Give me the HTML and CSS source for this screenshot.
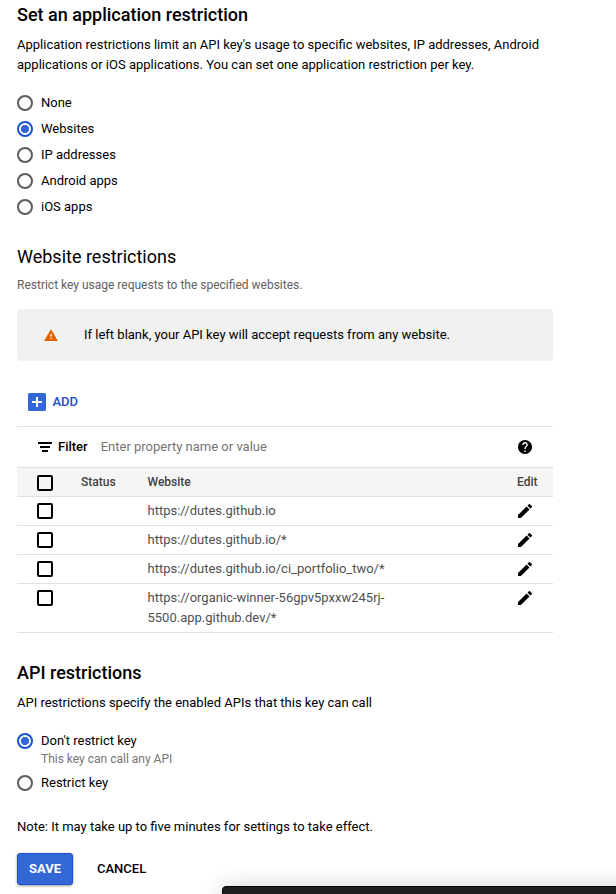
FILE: index.html
```html
<!DOCTYPE html>
<html lang="en">
<head>
<meta charset="utf-8">
<title>API key restrictions</title>
<link rel="stylesheet" href="styles.css">
</head>
<body>
<svg class="defs" aria-hidden="true">
  <symbol id="pencil" viewBox="3 3 18 18"><path d="M3 17.25V21h3.75L17.81 9.94l-3.75-3.75L3 17.25zM20.71 7.04a1 1 0 0 0 0-1.41l-2.34-2.34a1 1 0 0 0-1.41 0l-1.83 1.83 3.75 3.75 1.83-1.83z"/></symbol>
</svg>
<main class="page">
  <section class="application">
    <h2 class="title">Set an application restriction</h2>
    <p class="text intro">Application restrictions limit an API key's usage to specific websites, IP addresses, Android<br>applications or iOS applications. You can set one application restriction per key.</p>
    <div class="options">
      <label class="option"><span class="radio"></span><span>None</span></label>
      <label class="option"><span class="radio checked"></span><span>Websites</span></label>
      <label class="option"><span class="radio"></span><span>IP addresses</span></label>
      <label class="option"><span class="radio"></span><span>Android apps</span></label>
      <label class="option"><span class="radio"></span><span>iOS apps</span></label>
    </div>
  </section>

  <section class="websites">
    <h3 class="title light">Website restrictions</h3>
    <p class="hint">Restrict key usage requests to the specified websites.</p>
    <div class="notice">
      <svg class="warning" viewBox="1 2 22 19"><path fill="#e06500" d="M1 21h22L12 2z"/><path fill="#fff" d="M11 10h2v4h-2zM11 16h2v2h-2z"/></svg>
      <span class="notice-text">If left blank, your API key will accept requests from any website.</span>
    </div>
    <div class="add">
      <svg class="plus" viewBox="0 0 18 18"><rect width="18" height="18" rx="1.5" fill="#3367d6"/><path d="M8 4h2v4h4v2h-4v4H8v-4H4V8h4z" fill="#fff"/></svg>
      <span class="add-label">ADD</span>
    </div>
    <div class="filter">
      <svg class="filter-icon" viewBox="0 0 14 10"><path d="M0 0h14v2H0zM2 4h10v2H2zM4 8h6v2H4z"/></svg>
      <span class="filter-label">Filter</span>
      <span class="placeholder">Enter property name or value</span>
      <svg class="help" viewBox="2 2 20 20"><path d="M12 2C6.48 2 2 6.48 2 12s4.480 10 10 10 10-4.480 10-10S17.520 2 12 2zm1 17h-2v-2h2v2zm2.070-7.750l-.9.920C13.450 12.900 13 13.500 13 15h-2v-.5c0-1.100.45-2.100 1.170-2.830l1.240-1.260c.37-.36.59-.86.59-1.410 0-1.100-.9-2-2-2s-2 .9-2 2H8c0-2.210 1.790-4 4-4s4 1.790 4 4c0 .88-.36 1.680-.93 2.250z"/></svg>
    </div>
    <div class="table">
      <div class="row head"><span class="box"></span><span class="status">Status</span><span class="site">Website</span><span class="edit">Edit</span></div>
      <div class="row"><span class="box"></span><span></span><span class="site url">https://dutes.github.io</span><svg class="pencil"><use href="#pencil"/></svg></div>
      <div class="row"><span class="box"></span><span></span><span class="site url">https://dutes.github.io/*</span><svg class="pencil"><use href="#pencil"/></svg></div>
      <div class="row"><span class="box"></span><span></span><span class="site url">https://dutes.github.io/ci_portfolio_two/*</span><svg class="pencil"><use href="#pencil"/></svg></div>
      <div class="row tall"><span class="box"></span><span></span><span class="site url">https://organic-winner-56gpv5pxxw245rj-<br>5500.app.github.dev/*</span><svg class="pencil"><use href="#pencil"/></svg></div>
    </div>
  </section>

  <section class="api">
    <h2 class="title">API restrictions</h2>
    <p class="text api-intro">API restrictions specify the enabled APIs that this key can call</p>
    <div class="options">
      <label class="option"><span class="radio checked"></span><span>Don't restrict key</span></label>
      <p class="sub">This key can call any API</p>
      <label class="option"><span class="radio"></span><span>Restrict key</span></label>
    </div>
    <p class="text note">Note: It may take up to five minutes for settings to take effect.</p>
    <div class="actions"><button class="save">SAVE</button><button class="cancel">CANCEL</button></div>
  </section>
</main>
<div class="toast"></div>
</body>
</html>
```
FILE: styles.css
```css
* { box-sizing: border-box; }
body {
  margin: 0;
  height: 894px;
  overflow: hidden;
  position: relative;
  background: #fff;
  color: #000;
  font: 400 13px/20px Roboto, "Liberation Sans", sans-serif;
}
h2, h3, p { margin: 0; }
.defs { display: none; }
.page { width: 553px; padding: 3px 0 0 17px; }
.title { font-size: 18px; line-height: 24px; font-weight: 500; white-space: nowrap; }
.title.light { font-weight: 400; }
.text { white-space: nowrap; }
.intro { margin-top: 8px; }
.options { margin-top: 15px; }
.option { display: flex; align-items: center; gap: 8px; height: 26px; }
.radio {
  width: 16px;
  height: 16px;
  border: 2px solid #5c5c5c;
  border-radius: 50%;
}
.radio.checked { border-color: #1a53d4; background: radial-gradient(circle, #3367d6 3.8px, #fff 4.4px); }

.websites { margin-top: 25px; }
.hint { margin-top: 6px; font-size: 12px; color: #616161; }
.notice {
  display: flex;
  align-items: center;
  height: 52px;
  margin-top: 14px;
  padding-left: 27px;
  border-radius: 3px;
  background: #f1f1f1;
}
.warning { width: 14px; height: 12px; }
.notice-text { margin-left: 26px; }
.add { display: flex; align-items: center; height: 66px; padding: 16px 0 0 11px; border-bottom: 1px solid #e0e0e0; }
.plus { width: 18px; height: 18px; }
.add-label { margin-left: 6.5px; color: #1a50cf; font-weight: 500; }
.filter { display: flex; align-items: center; height: 41px; padding: 0 21px; border-bottom: 1px solid #e0e0e0; }
.filter-icon { width: 14px; height: 10px; }
.filter-label { margin-left: 6px; font-weight: 500; }
.placeholder { margin-left: 13px; color: #757575; }
.help { width: 14px; height: 14px; margin-left: auto; }

.row {
  display: grid;
  grid-template-columns: 44px 66.5px 1fr 36px;
  align-items: start;
  height: 29px;
  padding: 4px 0 0 20px;
  border-bottom: 1px solid #e0e0e0;
}
.row.head { background: #f5f5f5; color: #424242; font-size: 12px; font-weight: 500; }
.row.tall { height: 49px; }
.box { width: 16px; height: 16px; margin-top: 2px; border: 2px solid #000; border-radius: 2px; }
.head .box { margin-top: 3px; }
.url { color: #505050; }
.pencil { width: 14px; height: 14px; margin: 3px 0 0 1px; }

.api { margin-top: 28px; }
.api-intro { margin-top: 8px; }
.sub { height: 16px; margin: -5px 0 5px; padding-left: 24px; color: #757575; font-size: 12px; }
.note { margin-top: 21px; }
.actions { display: flex; margin-top: 16px; }
button { font: 500 13px/20px Roboto, sans-serif; padding: 0; border: 0; background: none; color: #000; }
.save {
  width: 56px;
  height: 32px;
  border: 1px solid #1a50cf;
  border-radius: 3px;
  background: #3367d6;
  color: #fff;
  font-weight: 700;
  box-shadow: 0 1px 3px rgba(0, 0, 0, .4);
}
.cancel { margin-left: 24px; }
.toast {
  position: absolute;
  left: 222px;
  top: 886px;
  width: 420px;
  height: 48px;
  border: 1px solid #000;
  border-radius: 4px;
  background: #202020;
  box-shadow: 0 2px 24px rgba(0, 0, 0, .2);
}
```
